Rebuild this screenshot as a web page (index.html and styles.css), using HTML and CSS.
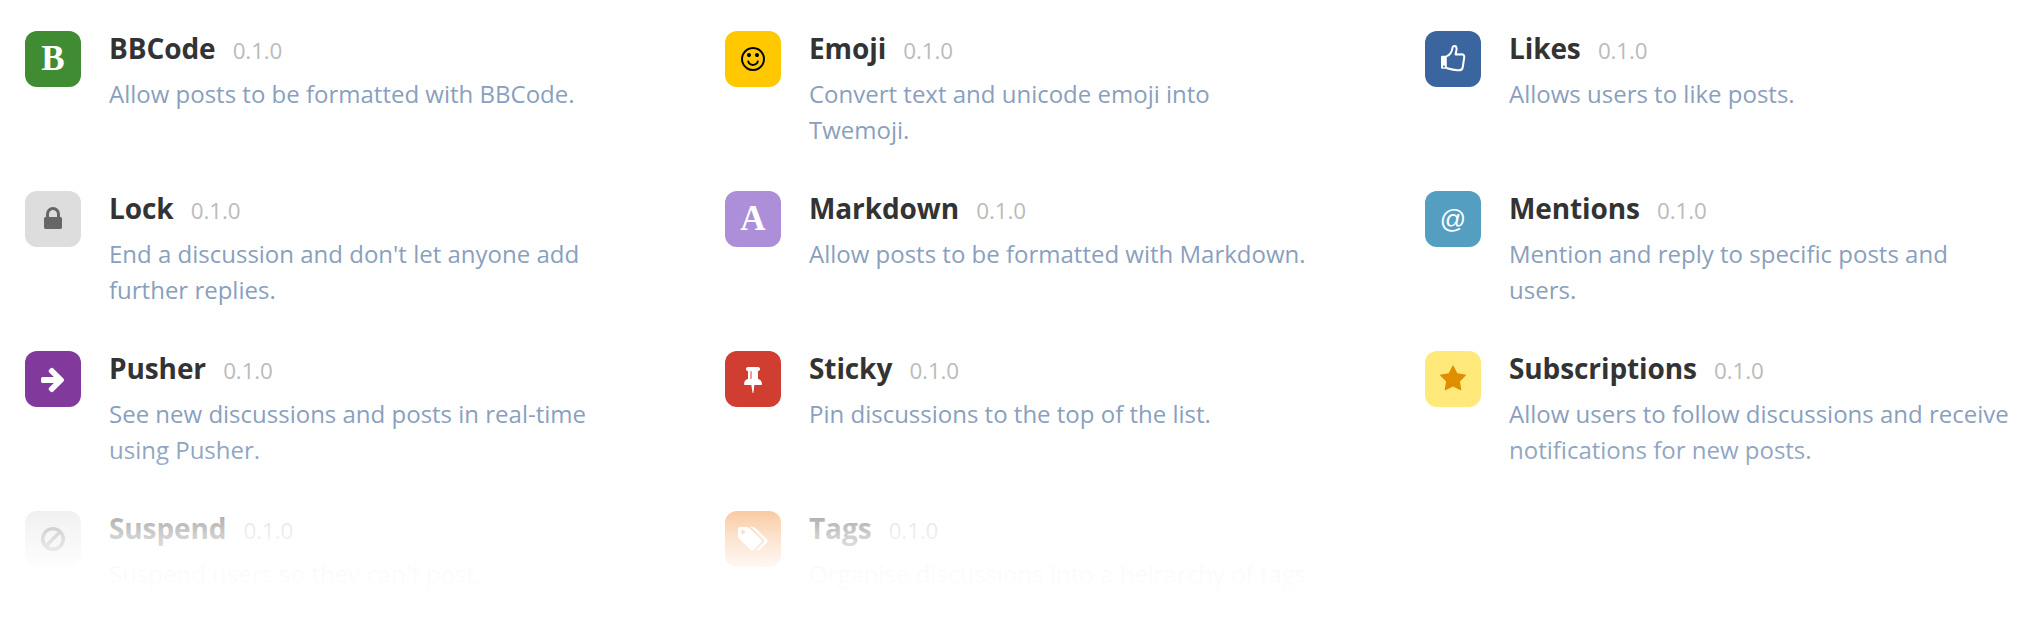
FILE: index.html
```html
<!DOCTYPE html>
<html lang="en">
<head>
<meta charset="utf-8">
<title>Extensions</title>
<link rel="stylesheet" href="styles.css">
</head>
<body>
<main class="extensions">
  <article class="extension">
    <span class="tile bbcode"><b class="letter">B</b></span>
    <div class="info"><h2 class="name">BBCode <small class="version">0.1.0</small></h2><p class="description">Allow posts to be formatted with BBCode.</p></div>
  </article>
  <article class="extension">
    <span class="tile emoji"><svg class="glyph" viewBox="0 0 1792 1792"><path d="M1262 1075q-37 121-138 195t-228 74-228-74-138-195q-8-25 4-48.5t38-31.5q25-8 48.5 4t31.5 38q25 80 92.5 129.5t151.5 49.5 151.5-49.5 92.5-129.5q8-26 32-38t49-4 37 31.5 4 48.5zm-494-435q0 53-37.5 90.5t-90.5 37.5-90.5-37.5-37.5-90.5 37.5-90.5 90.5-37.5 90.5 37.5 37.5 90.5zm512 0q0 53-37.5 90.5t-90.5 37.5-90.5-37.5-37.5-90.5 37.5-90.5 90.5-37.5 90.5 37.5 37.5 90.5zm256 256q0-130-51-248.5t-136.5-204-204-136.5-248.5-51-248.5 51-204 136.5-136.5 204-51 248.5 51 248.5 136.5 204 204 136.5 248.5 51 248.5-51 204-136.5 136.5-204 51-248.5zm128 0q0 209-103 385.5t-279.5 279.5-385.5 103-385.5-103-279.5-279.5-103-385.5 103-385.5 279.5-279.5 385.5-103 385.5 103 279.5 279.5 103 385.5z"/></svg></span>
    <div class="info"><h2 class="name">Emoji <small class="version">0.1.0</small></h2><p class="description">Convert text and unicode emoji into Twemoji.</p></div>
  </article>
  <article class="extension">
    <span class="tile likes"><svg class="glyph" viewBox="0 1 28 28"><path d="M3.200 11.800h4.600v13H3.200q-1.200 0-1.200-1.200V13q0-1.200 1.200-1.200z"/><circle class="cuff" cx="5" cy="22.500" r="1"/><path class="outline" d="M7.400 12.300C10.500 11.800 13 7.500 13.300 4.600C13.600 1.500 17.300 1 17.600 4.500C17.700 7 16.500 9.200 16.600 10.400L22.500 10.300C24.500 10.400 25.500 11.500 25.200 13.500L23.800 23C23.400 26.200 21.500 26.600 18.500 26.300C14 25.900 11 25 7.400 24"/></svg></span>
    <div class="info"><h2 class="name">Likes <small class="version">0.1.0</small></h2><p class="description">Allows users to like posts.</p></div>
  </article>
  <article class="extension">
    <span class="tile lock"><svg class="glyph" viewBox="0 0 1792 1792"><path d="M640 768h512v-192q0-106-75-181t-181-75-181 75-75 181v192zm832 96v576q0 40-28 68t-68 28h-960q-40 0-68-28t-28-68v-576q0-40 28-68t68-28h32v-192q0-184 132-316t316-132 316 132 132 316v192h32q40 0 68 28t28 68z"/></svg></span>
    <div class="info"><h2 class="name">Lock <small class="version">0.1.0</small></h2><p class="description">End a discussion and don't let anyone add further replies.</p></div>
  </article>
  <article class="extension">
    <span class="tile markdown"><b class="letter">A</b></span>
    <div class="info"><h2 class="name">Markdown <small class="version">0.1.0</small></h2><p class="description">Allow posts to be formatted with Markdown.</p></div>
  </article>
  <article class="extension">
    <span class="tile mentions"><span class="at">@</span></span>
    <div class="info"><h2 class="name">Mentions <small class="version">0.1.0</small></h2><p class="description">Mention and reply to specific posts and users.</p></div>
  </article>
  <article class="extension">
    <span class="tile pusher"><svg class="glyph" viewBox="0 0 1792 1792"><path d="M1600 960q0 54-37 91l-651 651q-39 37-91 37-51 0-90-37l-75-75q-38-38-38-91t38-91l293-293h-704q-52 0-84.500-37.500t-32.500-90.500v-128q0-53 32.500-90.500t84.500-37.500h704l-293-294q-38-36-38-90t38-90l75-75q38-38 90-38 53 0 91 38l651 651q37 35 37 90z"/></svg></span>
    <div class="info"><h2 class="name">Pusher <small class="version">0.1.0</small></h2><p class="description">See new discussions and posts in real-time using Pusher.</p></div>
  </article>
  <article class="extension">
    <span class="tile sticky"><svg class="glyph" viewBox="0 0 1792 1792"><path d="M800 864v-448q0-14-9-23t-23-9-23 9-9 23v448q0 14 9 23t23 9 23-9 9-23zm672 352q0 26-19 45t-45 19h-429l-51 483q-2 12-10.500 20.500t-20.500 8.500h-1q-27 0-32-27l-76-485h-404q-26 0-45-19t-19-45q0-123 78.500-221.500t177.500-98.500v-512q-52 0-90-38t-38-90 38-90 90-38h640q52 0 90 38t38 90-38 90-90 38v512q99 0 177.500 98.500t78.500 221.500z"/></svg></span>
    <div class="info"><h2 class="name">Sticky <small class="version">0.1.0</small></h2><p class="description">Pin discussions to the top of the list.</p></div>
  </article>
  <article class="extension">
    <span class="tile subscriptions"><svg class="glyph" viewBox="0 0 1792 1792"><path d="M1728 647q0 22-26 48l-363 354 86 500q1 7 1 20 0 21-10.500 35.500t-30.500 14.500q-19 0-40-12l-449-236-449 236q-22 12-40 12-21 0-31.500-14.500t-10.500-35.500q0-6 2-20l86-500-364-354q-25-27-25-48 0-37 56-46l502-73 225-455q19-41 49-41t49 41l225 455 502 73q56 9 56 46z"/></svg></span>
    <div class="info"><h2 class="name">Subscriptions <small class="version">0.1.0</small></h2><p class="description">Allow users to follow discussions and receive notifications for new posts.</p></div>
  </article>
  <article class="extension">
    <span class="tile suspend"><svg class="glyph" viewBox="0 0 1792 1792"><path d="M1440 893q0-161-87-295l-754 753q137 89 297 89 111 0 211.500-43.500t173.500-116.500 116-174.500 43-212.500zm-999 299l755-754q-135-91-300-91-148 0-273 73t-198 199-73 274q0 162 89 299zm1223-299q0 157-61 300t-163.500 246-245 164-298.500 61-298.500-61-245-164-163.500-246-61-300 61-299.500 163.500-245.500 245-164 298.500-61 298.500 61 245 164 163.500 245.500 61 299.500z"/></svg></span>
    <div class="info"><h2 class="name">Suspend <small class="version">0.1.0</small></h2><p class="description">Suspend users so they can't post.</p></div>
  </article>
  <article class="extension">
    <span class="tile tags"><svg class="glyph wide" viewBox="0 0 1920 1792"><path d="M448 448q0-53-37.500-90.500t-90.500-37.500-90.500 37.500-37.500 90.500 37.500 90.500 90.500 37.500 90.500-37.500 37.500-90.500zm1067 576q0 53-37 90l-491 492q-39 37-91 37-53 0-90-37l-715-716q-38-37-64.500-101t-26.500-117v-416q0-52 38-90t90-38h416q53 0 117 26.500t102 64.500l715 714q37 39 37 91zm384 0q0 53-37 90l-491 492q-39 37-91 37-36 0-59-14t-53-45l470-470q37-37 37-90 0-52-37-91l-715-714q-38-38-102-64.500t-117-26.500h224q53 0 117 26.500t102 64.500l715 714q37 39 37 91z"/></svg></span>
    <div class="info"><h2 class="name">Tags <small class="version">0.1.0</small></h2><p class="description">Organise discussions into a heirarchy of tags</p></div>
  </article>
</main>
<div class="fade"></div>
</body>
</html>
```
FILE: styles.css
```css
body {
  margin: 0;
  height: 618px;
  overflow: hidden;
  background: #fff;
  font-family: "Open Sans", sans-serif;
}
.extensions {
  display: grid;
  grid-template-columns: 700px 700px 595px;
  grid-template-rows: repeat(3, 160px) 107px;
  padding: 31px 0 0 25px;
}
.extension {
  display: flex;
  gap: 28px;
}
.tile {
  flex: none;
  display: flex;
  align-items: center;
  justify-content: center;
  width: 56px;
  height: 56px;
  border-radius: 12px;
  color: #fff;
}
.glyph {
  width: 28px;
  height: 28px;
  fill: currentColor;
}
.wide { width: 30px; }
.outline {
  fill: none;
  stroke: currentColor;
  stroke-width: 2;
  stroke-linejoin: round;
}
.cuff { fill: #3b659e; }
.letter {
  font: bold 35px/56px "Liberation Serif", serif;
}
.at {
  font: 26px/54px "Liberation Sans", sans-serif;
}
.bbcode { background: #408c33; }
.emoji { background: #ffc800; color: #000; }
.likes { background: #3b659e; }
.lock { background: #ddd; color: #666; }
.markdown { background: #ac8fd8; }
.mentions { background: #539ec1; }
.pusher { background: #81399c; }
.sticky { background: #d03e32; }
.subscriptions { background: #ffe97b; color: #de8e00; }
.suspend { background: #ddd; color: #666; }
.tags { background: #f28326; }
.info { width: 500px; }
.name {
  margin: 0;
  font-size: 28px;
  line-height: 34px;
  font-weight: 700;
  letter-spacing: -0.1px;
  color: #333;
}
.version {
  margin-left: 10px;
  font-size: 22.4px;
  font-weight: 400;
  color: #bbb;
}
.description {
  margin: 8px 0 0;
  font-size: 24px;
  line-height: 36px;
  color: #8a9fbe;
}
.fade {
  position: absolute;
  inset: 418px 0 0;
  background: linear-gradient(
    rgba(255, 255, 255, 0),
    rgba(255, 255, 255, 0.08) 38px,
    rgba(255, 255, 255, 0.57) 93px,
    rgba(255, 255, 255, 0.76) 117px,
    rgba(255, 255, 255, 0.95) 149px,
    #fff 185px
  );
}
```
